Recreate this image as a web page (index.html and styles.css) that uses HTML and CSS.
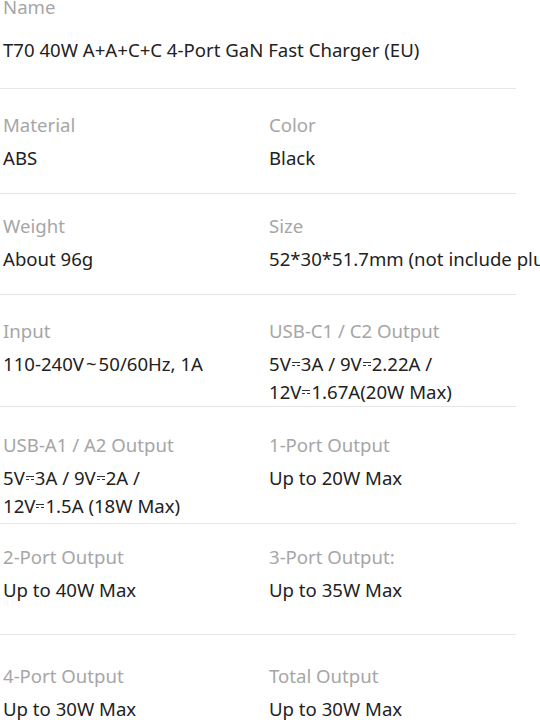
FILE: index.html
```html
<!DOCTYPE html>
<html>
<head>
<meta charset="utf-8">
<link rel="stylesheet" href="styles.css">
</head>
<body>
<div class="specs">
  <section class="row row-name">
    <div class="cell">
      <div class="label">Name</div>
      <div class="value">T70 40W A+A+C+C 4-Port GaN Fast Charger (EU)</div>
    </div>
  </section>
  <section class="row row-material">
    <div class="cell"><div class="label">Material</div><div class="value">ABS</div></div>
    <div class="cell"><div class="label">Color</div><div class="value">Black</div></div>
  </section>
  <section class="row row-weight">
    <div class="cell"><div class="label">Weight</div><div class="value">About 96g</div></div>
    <div class="cell"><div class="label">Size</div><div class="value">52*30*51.7mm (not include plug)</div></div>
  </section>
  <section class="row row-input">
    <div class="cell"><div class="label">Input</div><div class="value">110-240V<span class="ac">~</span>50/60Hz, 1A</div></div>
    <div class="cell"><div class="label">USB-C1 / C2 Output</div><div class="value">5V<span class="dc"></span>3A / 9V<span class="dc"></span>2.22A /<br>12V<span class="dc"></span>1.67A(20W Max)</div></div>
  </section>
  <section class="row row-usba">
    <div class="cell"><div class="label">USB-A1 / A2 Output</div><div class="value">5V<span class="dc"></span>3A / 9V<span class="dc"></span>2A /<br>12V<span class="dc"></span>1.5A (18W Max)</div></div>
    <div class="cell"><div class="label">1-Port Output</div><div class="value">Up to 20W Max</div></div>
  </section>
  <section class="row row-two">
    <div class="cell"><div class="label">2-Port Output</div><div class="value">Up to 40W Max</div></div>
    <div class="cell"><div class="label">3-Port Output:</div><div class="value">Up to 35W Max</div></div>
  </section>
  <section class="row row-four">
    <div class="cell"><div class="label">4-Port Output</div><div class="value">Up to 30W Max</div></div>
    <div class="cell"><div class="label">Total Output</div><div class="value">Up to 30W Max</div></div>
  </section>
</div>
</body>
</html>
```
FILE: styles.css
```css
html, body {
  margin: 0;
  padding: 0;
  background: #ffffff;
  overflow: hidden;
}
body {
  width: 540px;
  height: 720px;
  font-family: "Noto Sans", "Open Sans", sans-serif;
  font-size: 18.6px;
  color: #222222;
}
.specs {
  width: 516px;
  margin-top: -7px;
}
.row {
  display: grid;
  grid-template-columns: 266px 1fr;
  border-bottom: 1px solid #e6e6e6;
  padding-left: 3px;
}
.row-name { grid-template-columns: 1fr; padding-top: 0; padding-bottom: 24px; }
.row-material { padding-top: 22px; padding-bottom: 21px; }
.row-weight { padding-top: 18px; padding-bottom: 21px; }
.row-input { padding-top: 22px; padding-bottom: 0; }
.row-usba { padding-top: 24px; padding-bottom: 3px; }
.row-two { padding-top: 19px; padding-bottom: 30px; }
.row-four { padding-top: 27px; border-bottom: none; }
.label {
  color: #a6a6a6;
  line-height: 28px;
  margin-bottom: 5px;
}
.row-name .label { margin-bottom: 15px; }
.value {
  line-height: 28px;
  white-space: nowrap;
}
.ac { margin: 0 2px; }
.dc {
  display: inline-block;
  width: 8px;
  height: 4px;
  margin: 0 1px;
  vertical-align: 5px;
  border-top: 1px solid #333;
  border-bottom: 1px dashed #333;
  box-sizing: border-box;
}
```
